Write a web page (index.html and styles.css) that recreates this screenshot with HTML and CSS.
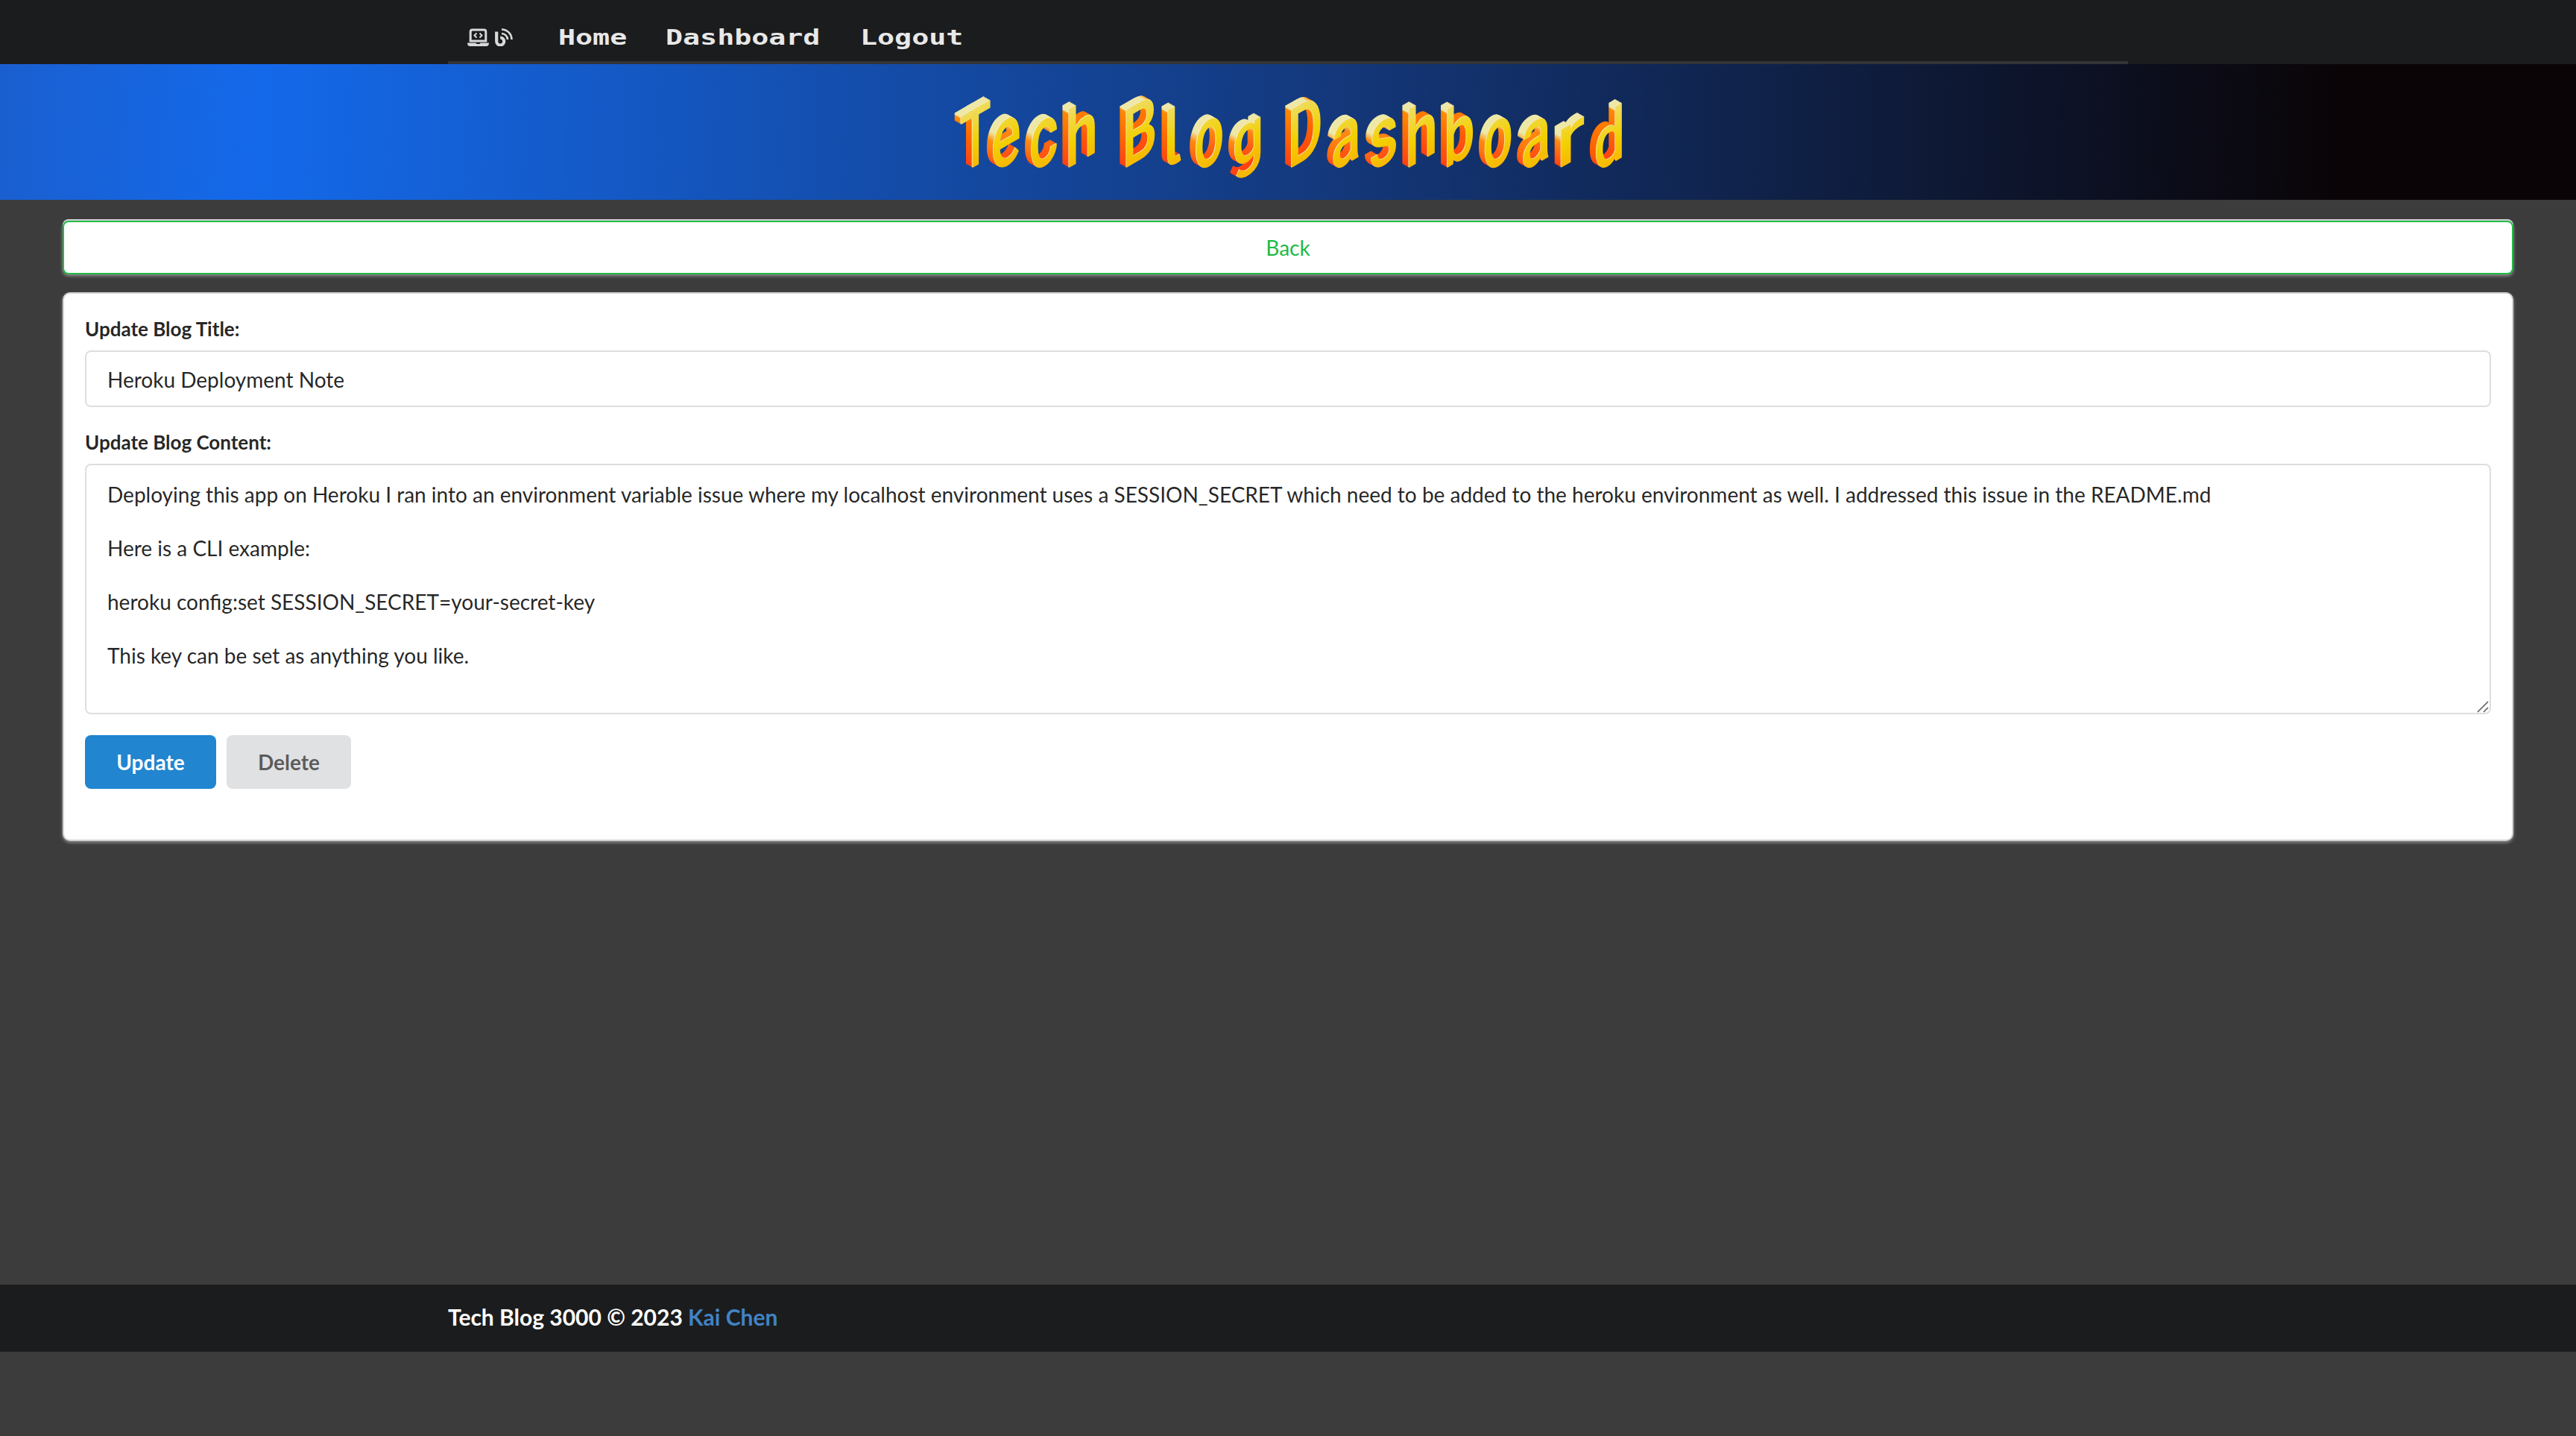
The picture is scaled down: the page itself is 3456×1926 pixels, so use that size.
FILE: index.html
```html
<!DOCTYPE html>
<html lang="en">
<head>
<meta charset="utf-8">
<title>Tech Blog Dashboard</title>
<link rel="stylesheet" href="styles.css">
</head>
<body>
<header class="topbar">
  <nav class="menu">
    <a class="brand" href="#" aria-label="Tech Blog">
      <svg class="icon-laptop" viewBox="0 0 29 24" fill="none" stroke="currentColor">
        <path d="M4.2 17V4.5Q4.2 2 6.7 2H22.3Q24.8 2 24.8 4.5V17Z" stroke-width="3"/>
        <path d="M12.5 6.5L9.5 9.5L12.5 12.5M16.5 6.5L19.5 9.5L16.5 12.5" stroke-width="2"/>
        <path d="M0 19.5H11.5L12.5 21H16.5L17.5 19.5H29Q29 24 25 24H4Q0 24 0 19.5Z" fill="currentColor" stroke="none"/>
      </svg>
      <svg class="icon-blog" viewBox="0 0 24 24" fill="none" stroke="currentColor">
        <path d="M2.2 4.5V17.5A5 5 0 1 0 7.2 12.5" stroke-width="4.2"/>
        <path d="M9 1.5A13.5 13.5 0 0 1 22.5 15M9 7A8 8 0 0 1 17 15" stroke-width="2.6"/>
      </svg>
    </a>
    <a class="link home" href="#"><span>Home</span></a>
    <a class="link dash" href="#"><span>Dashboard</span></a>
    <a class="link out" href="#"><span>Logout</span></a>
  </nav>
</header>

<section class="banner">
  <h1 class="title">
    <svg class="title-art" viewBox="1270 86 920 182" aria-label="Tech Blog Dashboard">
      <defs>
        <linearGradient id="face" gradientUnits="userSpaceOnUse" x1="0" y1="-75" x2="0" y2="0">
          <stop offset="0" stop-color="#eedd66"/>
          <stop offset=".6" stop-color="#f3d000"/>
          <stop offset="1" stop-color="#f7b800"/>
        </linearGradient>
        <linearGradient id="tall" gradientUnits="userSpaceOnUse" x1="0" y1="-75" x2="0" y2="0">
          <stop offset="0" stop-color="#eee8a8"/>
          <stop offset=".07" stop-color="#eee8a8"/>
          <stop offset=".1" stop-color="#ff8a00"/>
          <stop offset=".5" stop-color="#ff6a00"/>
          <stop offset="1" stop-color="#ff4012"/>
        </linearGradient>
        <linearGradient id="low" gradientUnits="userSpaceOnUse" x1="0" y1="-54" x2="0" y2="0">
          <stop offset="0" stop-color="#eee8a8"/>
          <stop offset=".2" stop-color="#eee8a8"/>
          <stop offset=".36" stop-color="#ff8c10"/>
          <stop offset="1" stop-color="#ff4212"/>
        </linearGradient>
        <g id="word" class="glyphs">
          <g transform="translate(1289.3 234) skewY(-30) scale(.69 1.09)"><text class="tall" x="-2">T</text></g>
          <g transform="translate(1332.7 232) skewY(-30) scale(.75 1.15)"><text x="-4">e</text></g>
          <g transform="translate(1384 232) skewY(-30) scale(.75 1.15)"><text x="-4">c</text></g>
          <g transform="translate(1434.3 225) skewY(-30) scale(.79 1.05)"><text class="tall" x="-6">h</text></g>
          <g transform="translate(1511 225) skewY(-30) scale(.75 1.09)"><text class="tall" x="-7">B</text></g>
          <g transform="translate(1566 226) skewY(-30) scale(.86 1.07)"><text class="tall tail" x="-6">l</text></g>
          <g transform="translate(1605 232) skewY(-30) scale(.71 1.15)"><text x="-4">o</text></g>
          <g transform="translate(1656.7 226) skewY(-30) scale(.74 .94)"><text x="-4">g</text></g>
          <g transform="translate(1732.7 225) skewY(-30) scale(.73 1.1)"><text class="tall" x="-7">D</text></g>
          <g transform="translate(1789 230) skewY(-30) scale(.74 1.1)"><text x="-4">a</text></g>
          <g transform="translate(1840 230.5) skewY(-30) scale(.76 1.12)"><text x="-4">s</text></g>
          <g transform="translate(1890.3 225) skewY(-30) scale(.79 1.05)"><text class="tall" x="-6">h</text></g>
          <g transform="translate(1941.7 225) skewY(-30) scale(.74 1.05)"><text class="tall" x="-6">b</text></g>
          <g transform="translate(1992.7 232) skewY(-30) scale(.71 1.15)"><text x="-4">o</text></g>
          <g transform="translate(2043.7 230) skewY(-30) scale(.74 1.1)"><text x="-4">a</text></g>
          <g transform="translate(2094.3 225) skewY(-30) scale(1.1 .96)"><text x="-6">r</text></g>
          <g transform="translate(2141.7 231) skewY(-30) scale(.74 .98)"><text class="tall" x="-4">d</text></g>
        </g>
      </defs>
      <g class="side">
        <use href="#word" x="-8.7" y="-5"/>
        <use href="#word" x="-7.8" y="-4.5"/>
        <use href="#word" x="-7" y="-4"/>
        <use href="#word" x="-6.1" y="-3.5"/>
        <use href="#word" x="-5.2" y="-3"/>
        <use href="#word" x="-4.3" y="-2.5"/>
        <use href="#word" x="-3.5" y="-2"/>
        <use href="#word" x="-2.6" y="-1.5"/>
        <use href="#word" x="-1.7" y="-1"/>
      </g>
      <g class="edge"><use href="#word" x="-.8" y="-.5"/></g>
      <g class="front"><use href="#word"/></g>
    </svg>
  </h1>
</section>

<main class="page">
  <a class="back" href="#">Back</a>
  <form class="card">
    <label class="label" for="blog-title">Update Blog Title:</label>
    <input class="field" id="blog-title" type="text" value="Heroku Deployment Note">
    <label class="label second" for="blog-content">Update Blog Content:</label>
    <div class="area-wrap">
      <textarea class="field area" id="blog-content">Deploying this app on Heroku I ran into an environment variable issue where my localhost environment uses a SESSION_SECRET which need to be added to the heroku environment as well. I addressed this issue in the README.md

Here is a CLI example:

heroku config:set SESSION_SECRET=your-secret-key

This key can be set as anything you like.</textarea>
      <svg class="grip" viewBox="0 0 16 16"><path d="M1 15L15 1M9 15L15 9"/></svg>
    </div>
    <div class="actions">
      <button class="button primary" type="button">Update</button>
      <button class="button delete" type="button">Delete</button>
    </div>
  </form>
</main>

<footer class="footer">
  <p class="credit">Tech Blog 3000 © 2023 <a href="#">Kai Chen</a></p>
</footer>
</body>
</html>
```

FILE: styles.css
```css
* { box-sizing: border-box; }

body {
  margin: 0;
  min-height: 1926px;
  display: flex;
  flex-direction: column;
  background: #3c3c3c;
  color: rgba(0, 0, 0, .87);
  font-family: Lato, "Liberation Sans", sans-serif;
  font-size: 28px;
}

a { color: #4183c4; text-decoration: none; }

.topbar {
  height: 86px;
  padding-left: 601px;
  background: #1b1c1d;
}
.menu {
  display: flex;
  align-items: center;
  width: 2254px;
  height: 86px;
  padding: 17px 0 0 26px;
  border-bottom: 4px solid #333435;
}
.brand { display: flex; gap: 8px; width: 122px; color: #d9d9d9; }
.icon-laptop { width: 29px; height: 24px; }
.icon-blog { width: 24px; height: 24px; }
.link {
  color: #e8e8e8;
  font: bold 29px/36px "DejaVu Sans Mono", monospace;
}
.link span { display: inline-block; transform: scaleX(1.32); transform-origin: left; }
.home { width: 144px; }
.dash { width: 261px; }

.banner {
  height: 182px;
  background: linear-gradient(91deg, #1a5fd0 0, #1469ea 10%, #143a80 50%, #0a0406 91%);
}
.title { display: flex; justify-content: center; margin: 0; padding-left: 4px; }
.title-art { width: 920px; height: 182px; }

/* Each use of the word picks its own fills for tall and low letters */
.glyphs { font: 500 100px Roboto, sans-serif; }
.glyphs text { fill: var(--low-fill); }
.glyphs .tall { fill: var(--tall-fill); }
.glyphs .tail { font-family: Inter, sans-serif; font-feature-settings: "cv05"; }
.side { --low-fill: url(#low); --tall-fill: url(#tall); }
.edge { --low-fill: #fbe9b8; --tall-fill: #fbe9b8; }
.front { --low-fill: url(#face); --tall-fill: url(#face); }

.page { flex: 1; padding: 28px 84px 0; }
.back {
  display: flex;
  align-items: center;
  justify-content: center;
  height: 72px;
  border: 2px solid #21ba45;
  border-radius: 8px;
  background: #fff;
  color: #21ba45;
  box-shadow: 0 -2px 0 #d4d4d5, 0 2px 4px rgba(255, 255, 255, .45);
}
.card {
  height: 736px;
  margin-top: 24px;
  padding: 33px 28px 0;
  border: 2px solid #d4d4d5;
  border-radius: 10px;
  background: #fff;
  box-shadow: 0 2px 4px rgba(255, 255, 255, .45);
}
.label { display: block; height: 43px; font-size: 26px; font-weight: 700; line-height: 28px; }
.second { margin-top: 33px; }
.field {
  display: block;
  width: 100%;
  height: 76px;
  padding: 1px 28px 0;
  border: 2px solid #dededf;
  border-radius: 8px;
  background: #fff;
  color: rgba(0, 0, 0, .87);
  font: inherit;
}
.area-wrap { position: relative; }
.area { height: 336px; padding: 21px 28px 0; line-height: 36px; resize: none; overflow: hidden; }
.grip { position: absolute; right: 3px; bottom: 2px; width: 16px; height: 16px; fill: none; stroke: #555; stroke-width: 1.5; }
.actions { display: flex; gap: 14px; margin-top: 28px; }
.button {
  height: 72px;
  padding: 0;
  border: 0;
  border-radius: 8px;
  font: 700 28px Lato, sans-serif;
}
.primary { width: 176px; background: #2185d0; color: #fff; }
.delete { width: 167px; background: #e0e1e2; color: rgba(0, 0, 0, .6); }

.footer {
  height: 90px;
  margin-bottom: 113px;
  padding-left: 601px;
  background: #1b1c1d;
}
.credit { margin: 0; color: #fff; font-size: 30px; font-weight: 700; line-height: 87px; }
```
